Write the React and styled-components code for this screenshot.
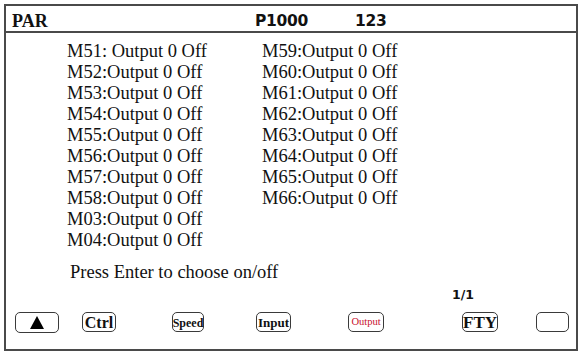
import React from "react";
import styled, { createGlobalStyle } from "styled-components";

const Global = createGlobalStyle`
  html, body { margin: 0; padding: 0; background: #fff; }
  body { width: 584px; height: 356px; overflow: hidden; }
`;

const Frame = styled.div`
  box-sizing: border-box;
  margin: 4px 0 0 4px;
  width: 574px;
  height: 347px;
  border: 2px solid #4a4a4a;
  display: flex;
  flex-direction: column;
  font-family: "Liberation Serif", "Times New Roman", serif;
  color: #111;
`;

const Header = styled.div`
  height: 27px;
  border-bottom: 2px solid #4a4a4a;
  display: flex;
  align-items: center;
  padding-top: 5px;
  box-sizing: border-box;
`;

const Title = styled.span`
  font-family: "Liberation Serif", serif;
  font-weight: bold;
  font-size: 18px;
  margin-left: 6px;
  width: 243px;
`;

const HeadCode = styled.span`
  font-family: "DejaVu Sans", Verdana, sans-serif;
  font-weight: bold;
  font-size: 15.5px;
  letter-spacing: -0.3px;
  width: ${(p) => p.$w}px;
`;

const Body = styled.div`
  flex: 1;
  display: flex;
  flex-direction: column;
  padding: 8px 0 0 61px;
`;

const Columns = styled.div`
  display: flex;
`;

const Column = styled.div`
  display: flex;
  flex-direction: column;
  width: ${(p) => p.$w}px;
`;

const Row = styled.div`
  font-size: 18.5px;
  line-height: 21px;
  white-space: nowrap;
`;

const Hint = styled.div`
  font-size: 18.5px;
  line-height: 21px;
  margin: 11px 0 0 3px;
`;

const Page = styled.div`
  font-family: "DejaVu Sans", Verdana, sans-serif;
  font-weight: bold;
  font-size: 12.5px;
  line-height: 14px;
  margin: 0 0 0 446px;
`;

const Toolbar = styled.div`
  display: flex;
  align-items: center;
  height: 24px;
  margin: 8px 0 15px 0;
  padding-left: 9px;
`;

const Key = styled.div`
  box-sizing: border-box;
  width: ${(p) => p.$w}px;
  height: ${(p) => p.$h || 20}px;
  margin-left: ${(p) => p.$ml}px;
  border: 1.5px solid #3a3a3a;
  border-radius: 5px;
  display: flex;
  align-items: center;
  justify-content: center;
  font-family: "Liberation Serif", serif;
  font-weight: ${(p) => (p.$red ? "normal" : "bold")};
  font-size: ${(p) => p.$fs || 14}px;
  color: ${(p) => (p.$red ? "#c8102e" : "#111")};
  line-height: 1;
  padding-top: 1px;
`;

const Triangle = styled.span`
  width: 0;
  height: 0;
  border-left: 7px solid transparent;
  border-right: 7px solid transparent;
  border-bottom: 13px solid #000;
`;

const left = [
  "M51: Output 0 Off",
  "M52:Output 0 Off",
  "M53:Output 0 Off",
  "M54:Output 0 Off",
  "M55:Output 0 Off",
  "M56:Output 0 Off",
  "M57:Output 0 Off",
  "M58:Output 0 Off",
  "M03:Output 0 Off",
  "M04:Output 0 Off",
];
const right = [
  "M59:Output 0 Off",
  "M60:Output 0 Off",
  "M61:Output 0 Off",
  "M62:Output 0 Off",
  "M63:Output 0 Off",
  "M64:Output 0 Off",
  "M65:Output 0 Off",
  "M66:Output 0 Off",
];

export default function App() {
  return (
    <>
      <Global />
      <Frame>
        <Header>
          <Title>PAR</Title>
          <HeadCode $w={100}>P1000</HeadCode>
          <HeadCode $w={60}>123</HeadCode>
        </Header>
        <Body>
          <Columns>
            <Column $w={195}>
              {left.map((t) => (
                <Row key={t}>{t}</Row>
              ))}
            </Column>
            <Column $w={200}>
              {right.map((t) => (
                <Row key={t}>{t}</Row>
              ))}
            </Column>
          </Columns>
          <Hint>Press Enter to choose on/off</Hint>
        </Body>
        <Page>1/1</Page>
        <Toolbar>
          <Key $w={44} $h={21} $ml={0}>
            <Triangle />
          </Key>
          <Key $w={34} $ml={23} $fs={16}>Ctrl</Key>
          <Key $w={32} $ml={56} $fs={12}>Speed</Key>
          <Key $w={35} $ml={52} $fs={13}>Input</Key>
          <Key $w={36} $ml={57} $fs={10.5} $red>Output</Key>
          <Key $w={36} $ml={78} $fs={17}>FTY</Key>
          <Key $w={33} $ml={38}></Key>
        </Toolbar>
      </Frame>
    </>
  );
}
